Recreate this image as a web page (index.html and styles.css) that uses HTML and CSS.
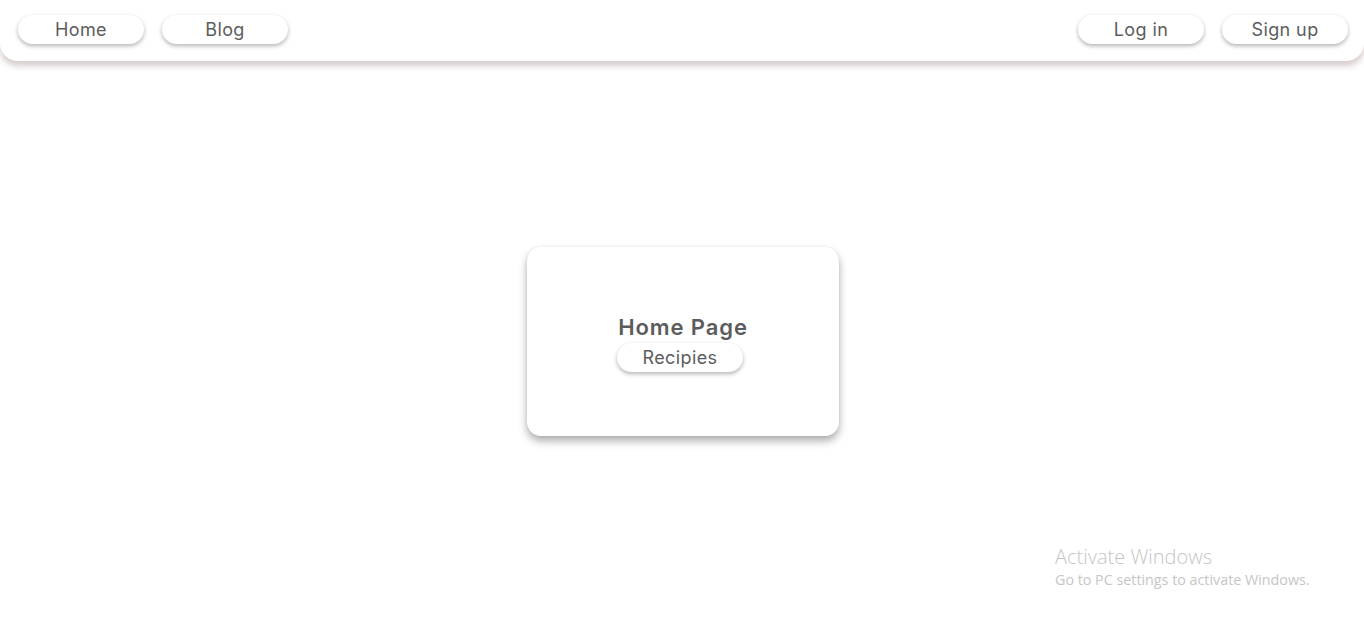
FILE: index.html
```html
<!DOCTYPE html>
<html lang="en">
<head>
<meta charset="utf-8">
<title>Home</title>
<link rel="stylesheet" href="styles.css">
</head>
<body>
  <nav class="navbar">
    <div class="nav-group">
      <a class="pill" href="#">Home</a>
      <a class="pill" href="#">Blog</a>
    </div>
    <div class="nav-group">
      <a class="pill" href="#">Log in</a>
      <a class="pill" href="#">Sign up</a>
    </div>
  </nav>
  <main class="main">
    <section class="card">
      <h1 class="card-title">Home Page</h1>
      <a class="pill" href="#">Recipies</a>
    </section>
  </main>
  <div class="watermark">
    <div class="wm-title">Activate Windows</div>
    <div class="wm-sub">Go to PC settings to activate Windows.</div>
  </div>
</body>
</html>
```
FILE: styles.css
```css
* { box-sizing: border-box; }
html, body { margin: 0; padding: 0; background: #fff; }
body {
  font-family: "Inter", "Liberation Sans", sans-serif;
  color: #5a5a5a;
  height: 622px;
  overflow: hidden;
  display: flex;
  flex-direction: column;
}
.navbar {
  height: 61px;
  flex: none;
  display: flex;
  justify-content: space-between;
  align-items: flex-start;
  padding: 15px 16px 0 18px;
  background: #fff;
  border-radius: 0 0 18px 18px;
  box-shadow: 0 5px 6px rgba(130, 95, 95, 0.32);
  position: relative;
  z-index: 1;
}
.nav-group { display: flex; gap: 18px; }
.pill {
  display: flex;
  align-items: center;
  justify-content: center;
  width: 126px;
  height: 29px;
  border-radius: 15px;
  background: #fff;
  color: #5c5c5c;
  text-decoration: none;
  font-size: 18px;
  font-weight: 400;
  letter-spacing: 0.4px;
  box-shadow: 0 2px 4px rgba(0, 0, 0, 0.3);
}
.main {
  flex: 1;
  display: flex;
  align-items: center;
  justify-content: center;
  padding-bottom: 1px;
}
.card {
  width: 312px;
  height: 189px;
  margin-left: 2px;
  border-radius: 14px;
  background: #fff;
  box-shadow: 0 5px 8px rgba(0, 0, 0, 0.32), 0 0 3px rgba(0, 0, 0, 0.06);
  display: flex;
  flex-direction: column;
  align-items: center;
  justify-content: center;
  padding-top: 4px;
}
.card-title {
  margin: 0 0 3px 0;
  font-size: 22px;
  font-weight: 600;
  letter-spacing: 0.9px;
  color: #5c5c5c;
  line-height: 26px;
}
.card .pill { margin-left: -6px; }
.watermark {
  position: absolute;
  left: 1055px;
  top: 545px;
  font-family: "Open Sans", "Liberation Sans", sans-serif;
  color: #c6c6c6;
}
.wm-title { font-size: 20px; font-weight: 300; line-height: 24px; }
.wm-sub { font-size: 14.3px; font-weight: 400; line-height: 20px; margin-top: 1px; }
```
